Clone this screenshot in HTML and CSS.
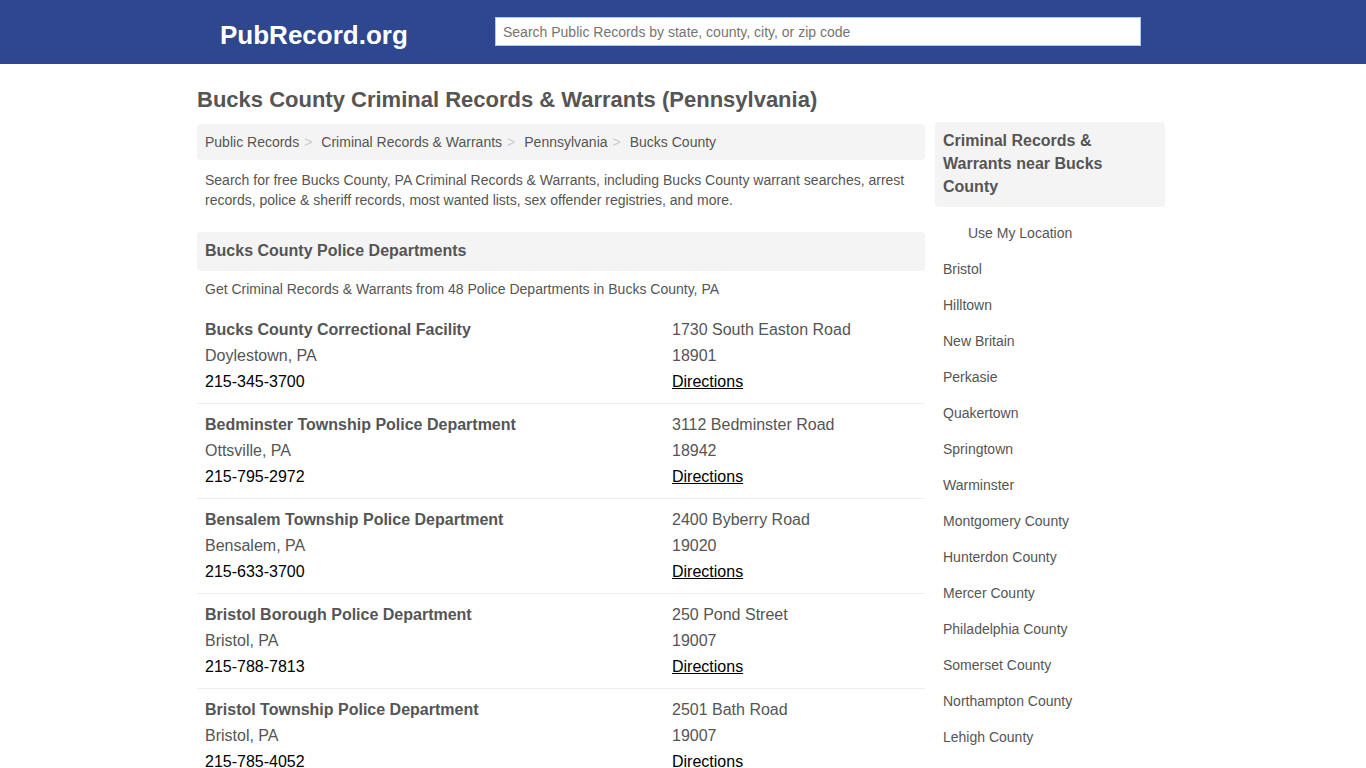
FILE: index.html
```html
<!DOCTYPE html>
<html lang="en">
<head>
<meta charset="utf-8">
<meta name="viewport" content="width=device-width, initial-scale=1">
<title>Bucks County Criminal Records &amp; Warrants (Pennsylvania)</title>
<link rel="stylesheet" href="styles.css">
</head>
<body>
<header class="site-header">
  <div class="header-inner">
    <a class="logo" href="#">PubRecord.org</a>
    <form class="search">
      <input class="search-input" type="text" aria-label="Search Public Records" placeholder="Search Public Records by state, county, city, or zip code">
    </form>
  </div>
</header>
<div class="page">
  <h1 class="page-title">Bucks County Criminal Records &amp; Warrants (Pennsylvania)</h1>
  <div class="columns">
    <main class="main">
      <nav aria-label="Breadcrumb">
        <ol class="breadcrumb">
          <li><a href="#">Public Records</a></li>
          <li><a href="#">Criminal Records &amp; Warrants</a></li>
          <li><a href="#">Pennsylvania</a></li>
          <li><a href="#">Bucks County</a></li>
        </ol>
      </nav>
      <p class="intro">Search for free Bucks County, PA Criminal Records &amp; Warrants, including Bucks County warrant searches, arrest records, police &amp; sheriff records, most wanted lists, sex offender registries, and more.</p>
      <h2 class="section-title">Bucks County Police Departments</h2>
      <p class="summary">Get Criminal Records &amp; Warrants from 48 Police Departments in Bucks County, PA</p>
      <ul class="listings">
        <li class="listing">
          <div><h3 class="name"><a href="#">Bucks County Correctional Facility</a></h3><p>Doylestown, PA</p><p><a class="phone" href="tel:215-345-3700">215-345-3700</a></p></div>
          <div><p>1730 South Easton Road</p><p>18901</p><p><a class="directions" href="#">Directions</a></p></div>
        </li>
        <li class="listing">
          <div><h3 class="name"><a href="#">Bedminster Township Police Department</a></h3><p>Ottsville, PA</p><p><a class="phone" href="tel:215-795-2972">215-795-2972</a></p></div>
          <div><p>3112 Bedminster Road</p><p>18942</p><p><a class="directions" href="#">Directions</a></p></div>
        </li>
        <li class="listing">
          <div><h3 class="name"><a href="#">Bensalem Township Police Department</a></h3><p>Bensalem, PA</p><p><a class="phone" href="tel:215-633-3700">215-633-3700</a></p></div>
          <div><p>2400 Byberry Road</p><p>19020</p><p><a class="directions" href="#">Directions</a></p></div>
        </li>
        <li class="listing">
          <div><h3 class="name"><a href="#">Bristol Borough Police Department</a></h3><p>Bristol, PA</p><p><a class="phone" href="tel:215-788-7813">215-788-7813</a></p></div>
          <div><p>250 Pond Street</p><p>19007</p><p><a class="directions" href="#">Directions</a></p></div>
        </li>
        <li class="listing">
          <div><h3 class="name"><a href="#">Bristol Township Police Department</a></h3><p>Bristol, PA</p><p><a class="phone" href="tel:215-785-4052">215-785-4052</a></p></div>
          <div><p>2501 Bath Road</p><p>19007</p><p><a class="directions" href="#">Directions</a></p></div>
        </li>
      </ul>
    </main>
    <aside class="sidebar">
      <h2 class="sidebar-title">Criminal Records &amp; Warrants near Bucks County</h2>
      <ul class="nearby">
        <li><a class="locate" href="#">Use My Location</a></li>
        <li><a href="#">Bristol</a></li>
        <li><a href="#">Hilltown</a></li>
        <li><a href="#">New Britain</a></li>
        <li><a href="#">Perkasie</a></li>
        <li><a href="#">Quakertown</a></li>
        <li><a href="#">Springtown</a></li>
        <li><a href="#">Warminster</a></li>
        <li><a href="#">Montgomery County</a></li>
        <li><a href="#">Hunterdon County</a></li>
        <li><a href="#">Mercer County</a></li>
        <li><a href="#">Philadelphia County</a></li>
        <li><a href="#">Somerset County</a></li>
        <li><a href="#">Northampton County</a></li>
        <li><a href="#">Lehigh County</a></li>
      </ul>
    </aside>
  </div>
</div>
</body>
</html>
```
FILE: styles.css
```css
* {
  box-sizing: border-box;
}

body {
  margin: 0;
  background: #fff;
  color: #555;
  font: 14px/20px "Liberation Sans", Arial, sans-serif;
}

h1, h2, h3, p, ul, ol {
  margin: 0;
  padding: 0;
}

ul, ol {
  list-style: none;
}

a {
  color: inherit;
  text-decoration: none;
}

.site-header {
  background: #2e478f;
}

.header-inner {
  display: flex;
  align-items: flex-start;
  max-width: 1000px;
  min-height: 64px;
  margin: 0 auto;
  padding: 17px 42px 0 37px;
}

.logo {
  flex: 0 0 275px;
  color: #fff;
  font-size: 26px;
  line-height: 36px;
  font-weight: bold;
}

.search {
  flex: 1;
  display: flex;
}

.search-input {
  width: 100%;
  height: 29px;
  padding: 0 7px;
  border: 1px solid #a9c8f5;
  border-radius: 0;
  background: #fff;
  color: #555;
  font: inherit;
}

.search-input::placeholder {
  color: #757575;
}

.page {
  max-width: 1000px;
  margin: 0 auto;
  padding: 22px 18px 0 14px;
}

.page-title {
  padding-bottom: 8px;
  font-size: 22px;
  line-height: 28px;
}

.columns {
  display: flex;
  align-items: flex-start;
  gap: 10px;
}

.main {
  flex: 1;
  min-width: 0;
  padding-top: 2px;
}

.breadcrumb {
  display: flex;
  flex-wrap: wrap;
  padding: 8px;
  border-radius: 4px;
  background: #f4f4f4;
}

.breadcrumb li:not(:last-child)::after {
  content: ">";
  padding: 0 9px 0 5px;
  color: #ccc;
}

.intro {
  padding: 10px 8px 22px;
}

.section-title,
.sidebar-title {
  padding: 7px 8px 9px;
  border-radius: 4px;
  background: #f4f4f4;
  font-size: 16px;
  line-height: 23px;
}

.summary {
  padding: 8px 8px 10px;
}

.listing {
  display: grid;
  grid-template-columns: 467px 1fr;
  padding: 8px;
  border-bottom: 1px solid #eee;
  font-size: 16px;
  line-height: 26px;
}

.name {
  font-size: 16px;
}

.phone,
.directions {
  color: #000;
}

.directions {
  text-decoration: underline;
}

.sidebar {
  flex: 0 0 230px;
}

.sidebar-title {
  padding-right: 24px;
}

.nearby {
  padding-top: 8px;
}

.nearby a {
  display: block;
  padding: 8px;
}

.nearby .locate {
  padding-left: 33px;
}
```
